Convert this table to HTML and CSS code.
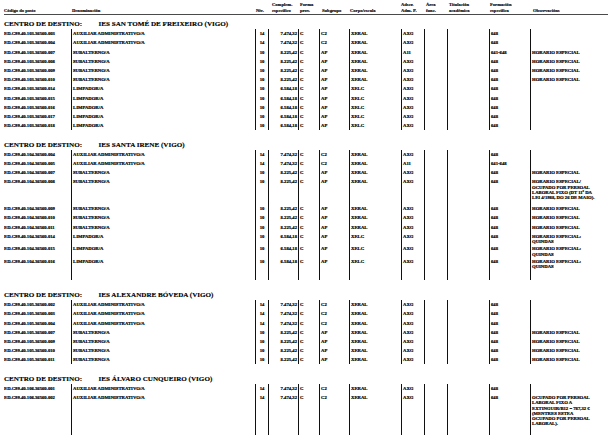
FILE: index.html
```html
<!DOCTYPE html>
<html lang="gl">
<head>
<meta charset="utf-8">
<title>Relación de postos</title>
<link rel="stylesheet" href="styles.css">
</head>
<body>
<div class="page">
  <div class="head">
    <div class="h1 lo">Código do posto</div>
    <div class="h2 lo">Denominación</div>
    <div class="h3 lo">Niv.</div>
    <div class="h4">Complem.<br>específico</div>
    <div class="h5">Forma<br>prov.</div>
    <div class="h6 lo">Subgrupo</div>
    <div class="h7 lo">Corpo/escala</div>
    <div class="h8">Adscr.<br>Adm. P.</div>
    <div class="h9">Área<br>func.</div>
    <div class="h10">Titulación<br>académica</div>
    <div class="h11">Formación<br>específica</div>
    <div class="h12 lo">Observacións</div>
  </div>

  <section class="sec">
    <div class="title"><span>CENTRO DE DESTINO:</span><span class="centre">IES SAN TOMÉ DE FREIXEIRO (VIGO)</span></div>
    <div class="tbl">
      <div class="row"><div>ED.C99.40.103.36560.003</div><div>AUXILIAR ADMINISTRATIVO/A</div><div class="n">14</div><div class="r">7.474,32</div><div>C</div><div>C2</div><div>XERAL</div><div>AXG</div><div></div><div></div><div>648</div><div></div></div>
      <div class="row"><div>ED.C99.40.103.36560.004</div><div>AUXILIAR ADMINISTRATIVO/A</div><div class="n">14</div><div class="r">7.474,32</div><div>C</div><div>C2</div><div>XERAL</div><div>AXG</div><div></div><div></div><div>648</div><div></div></div>
      <div class="row"><div>ED.C99.40.103.36560.007</div><div>SUBALTERNO/A</div><div class="n">10</div><div class="r">8.225,42</div><div>C</div><div>AP</div><div>XERAL</div><div>A11</div><div></div><div></div><div>641-648</div><div>HORARIO ESPECIAL</div></div>
      <div class="row"><div>ED.C99.40.103.36560.008</div><div>SUBALTERNO/A</div><div class="n">10</div><div class="r">8.225,42</div><div>C</div><div>AP</div><div>XERAL</div><div>AXG</div><div></div><div></div><div>648</div><div>HORARIO ESPECIAL</div></div>
      <div class="row"><div>ED.C99.40.103.36560.009</div><div>SUBALTERNO/A</div><div class="n">10</div><div class="r">8.225,42</div><div>C</div><div>AP</div><div>XERAL</div><div>AXG</div><div></div><div></div><div>648</div><div>HORARIO ESPECIAL</div></div>
      <div class="row"><div>ED.C99.40.103.36560.010</div><div>SUBALTERNO/A</div><div class="n">10</div><div class="r">8.225,42</div><div>C</div><div>AP</div><div>XERAL</div><div>AXG</div><div></div><div></div><div>648</div><div>HORARIO ESPECIAL</div></div>
      <div class="row"><div>ED.C99.40.103.36560.014</div><div>LIMPADOR/A</div><div class="n">10</div><div class="r">6.584,18</div><div>C</div><div>AP</div><div>XELC</div><div>AXG</div><div></div><div></div><div>648</div><div></div></div>
      <div class="row"><div>ED.C99.40.103.36560.015</div><div>LIMPADOR/A</div><div class="n">10</div><div class="r">6.584,18</div><div>C</div><div>AP</div><div>XELC</div><div>AXG</div><div></div><div></div><div>648</div><div></div></div>
      <div class="row"><div>ED.C99.40.103.36560.016</div><div>LIMPADOR/A</div><div class="n">10</div><div class="r">6.584,18</div><div>C</div><div>AP</div><div>XELC</div><div>AXG</div><div></div><div></div><div>648</div><div></div></div>
      <div class="row"><div>ED.C99.40.103.36560.017</div><div>LIMPADOR/A</div><div class="n">10</div><div class="r">6.584,18</div><div>C</div><div>AP</div><div>XELC</div><div>AXG</div><div></div><div></div><div>648</div><div></div></div>
      <div class="row"><div>ED.C99.40.103.36560.018</div><div>LIMPADOR/A</div><div class="n">10</div><div class="r">6.584,18</div><div>C</div><div>AP</div><div>XELC</div><div>AXG</div><div></div><div></div><div>648</div><div></div></div>
    </div>
  </section>

  <section class="sec">
    <div class="title"><span>CENTRO DE DESTINO:</span><span class="centre">IES SANTA IRENE (VIGO)</span></div>
    <div class="tbl">
      <div class="row"><div>ED.C99.40.104.36560.004</div><div>AUXILIAR ADMINISTRATIVO/A</div><div class="n">14</div><div class="r">7.474,32</div><div>C</div><div>C2</div><div>XERAL</div><div>AXG</div><div></div><div></div><div>648</div><div></div></div>
      <div class="row"><div>ED.C99.40.104.36560.005</div><div>AUXILIAR ADMINISTRATIVO/A</div><div class="n">14</div><div class="r">7.474,32</div><div>C</div><div>C2</div><div>XERAL</div><div>A11</div><div></div><div></div><div>641-648</div><div></div></div>
      <div class="row"><div>ED.C99.40.104.36560.007</div><div>SUBALTERNO/A</div><div class="n">10</div><div class="r">8.225,42</div><div>C</div><div>AP</div><div>XERAL</div><div>AXG</div><div></div><div></div><div>648</div><div>HORARIO ESPECIAL</div></div>
      <div class="row pad4"><div>ED.C99.40.104.36560.008</div><div>SUBALTERNO/A</div><div class="n">10</div><div class="r">8.225,42</div><div>C</div><div>AP</div><div>XERAL</div><div>AXG</div><div></div><div></div><div>648</div><div>HORARIO ESPECIAL/<br>OCUPADO POR PERSOAL<br>LABORAL FIXO (DT 11ª DA<br>LEI 4/1988, DO 26 DE MAIO).</div></div>
      <div class="row"><div>ED.C99.40.104.36560.009</div><div>SUBALTERNO/A</div><div class="n">10</div><div class="r">8.225,42</div><div>C</div><div>AP</div><div>XERAL</div><div>AXG</div><div></div><div></div><div>648</div><div>HORARIO ESPECIAL</div></div>
      <div class="row"><div>ED.C99.40.104.36560.010</div><div>SUBALTERNO/A</div><div class="n">10</div><div class="r">8.225,42</div><div>C</div><div>AP</div><div>XERAL</div><div>AXG</div><div></div><div></div><div>648</div><div>HORARIO ESPECIAL</div></div>
      <div class="row"><div>ED.C99.40.104.36560.011</div><div>SUBALTERNO/A</div><div class="n">10</div><div class="r">8.225,42</div><div>C</div><div>AP</div><div>XERAL</div><div>AXG</div><div></div><div></div><div>648</div><div>HORARIO ESPECIAL</div></div>
      <div class="row"><div>ED.C99.40.104.36560.014</div><div>LIMPADOR/A</div><div class="n">10</div><div class="r">6.584,18</div><div>C</div><div>AP</div><div>XELC</div><div>AXG</div><div></div><div></div><div>648</div><div>HORARIO ESPECIAL:<br>QUINDAS</div></div>
      <div class="row"><div>ED.C99.40.104.36560.015</div><div>LIMPADOR/A</div><div class="n">10</div><div class="r">6.584,18</div><div>C</div><div>AP</div><div>XELC</div><div>AXG</div><div></div><div></div><div>648</div><div>HORARIO ESPECIAL:<br>QUINDAS</div></div>
      <div class="row pad11"><div>ED.C99.40.104.36560.016</div><div>LIMPADOR/A</div><div class="n">10</div><div class="r">6.584,18</div><div>C</div><div>AP</div><div>XELC</div><div>AXG</div><div></div><div></div><div>648</div><div>HORARIO ESPECIAL:<br>QUINDAS</div></div>
    </div>
  </section>

  <section class="sec">
    <div class="title"><span>CENTRO DE DESTINO:</span><span class="centre">IES ALEXANDRE BÓVEDA (VIGO)</span></div>
    <div class="tbl">
      <div class="row"><div>ED.C99.40.105.36560.002</div><div>AUXILIAR ADMINISTRATIVO/A</div><div class="n">14</div><div class="r">7.474,32</div><div>C</div><div>C2</div><div>XERAL</div><div>AXG</div><div></div><div></div><div>648</div><div></div></div>
      <div class="row"><div>ED.C99.40.105.36560.003</div><div>AUXILIAR ADMINISTRATIVO/A</div><div class="n">14</div><div class="r">7.474,32</div><div>C</div><div>C2</div><div>XERAL</div><div>AXG</div><div></div><div></div><div>648</div><div></div></div>
      <div class="row"><div>ED.C99.40.105.36560.004</div><div>AUXILIAR ADMINISTRATIVO/A</div><div class="n">14</div><div class="r">7.474,32</div><div>C</div><div>C2</div><div>XERAL</div><div>AXG</div><div></div><div></div><div>648</div><div></div></div>
      <div class="row"><div>ED.C99.40.105.36560.007</div><div>SUBALTERNO/A</div><div class="n">10</div><div class="r">8.225,42</div><div>C</div><div>AP</div><div>XERAL</div><div>AXG</div><div></div><div></div><div>648</div><div>HORARIO ESPECIAL</div></div>
      <div class="row"><div>ED.C99.40.105.36560.009</div><div>SUBALTERNO/A</div><div class="n">10</div><div class="r">8.225,42</div><div>C</div><div>AP</div><div>XERAL</div><div>AXG</div><div></div><div></div><div>648</div><div>HORARIO ESPECIAL</div></div>
      <div class="row"><div>ED.C99.40.105.36560.010</div><div>SUBALTERNO/A</div><div class="n">10</div><div class="r">8.225,42</div><div>C</div><div>AP</div><div>XERAL</div><div>AXG</div><div></div><div></div><div>648</div><div>HORARIO ESPECIAL</div></div>
      <div class="row"><div>ED.C99.40.105.36560.011</div><div>SUBALTERNO/A</div><div class="n">10</div><div class="r">8.225,42</div><div>C</div><div>AP</div><div>XERAL</div><div>AXG</div><div></div><div></div><div>648</div><div>HORARIO ESPECIAL</div></div>
    </div>
  </section>

  <section class="sec">
    <div class="title"><span>CENTRO DE DESTINO:</span><span class="centre">IES ÁLVARO CUNQUEIRO (VIGO)</span></div>
    <div class="tbl">
      <div class="row"><div>ED.C99.40.106.36560.001</div><div>AUXILIAR ADMINISTRATIVO/A</div><div class="n">14</div><div class="r">7.474,32</div><div>C</div><div>C2</div><div>XERAL</div><div>AXG</div><div></div><div></div><div>648</div><div></div></div>
      <div class="row pad8"><div>ED.C99.40.106.36560.002</div><div>AUXILIAR ADMINISTRATIVO/A</div><div class="n">14</div><div class="r">7.474,32</div><div>C</div><div>C2</div><div>XERAL</div><div>AXG</div><div></div><div></div><div>648</div><div>OCUPADO POR PERSOAL<br>LABORAL FIXO A<br>EXTINGUIR/B12 = 787,32 €<br>(MENTRES ESTEA<br>OCUPADO POR PERSOAL<br>LABORAL).</div></div>
    </div>
  </section>
</div>
</body>
</html>
```

FILE: styles.css
```css
html, body {
  margin: 0;
  padding: 0;
  background: #ffffff;
}

body {
  font-family: "Liberation Serif", "Times New Roman", serif;
  font-weight: bold;
  color: #000000;
}

.page {
  padding: 0 7px 0 4px;
}

.head,
.row {
  display: grid;
  grid-template-columns: 67px 184px 13px 30px 21px 30px 52px 23px 23px 42px 41px 78px;
}

.head {
  height: 15px;
  box-sizing: border-box;
  padding-top: 1.5px;
  border-bottom: 1px solid #4a4a4a;
  font-size: 4.6px;
  line-height: 6.2px;
  white-space: nowrap;
  -webkit-text-stroke: 0.15px #000;
}

.head .lo {
  align-self: end;
}

.h2 { padding-left: 1px; }
.h3 { padding-left: 1px; }
.h4 { padding-left: 4px; }
.h5 { padding-left: 2px; }
.h6 { padding-left: 3px; }
.h7 { padding-left: 1px; }
.h9 { padding-left: 2px; }
.h10 { padding-left: 2px; }
.h11 { padding-left: 1px; }
.h12 { padding-left: 3px; }

.sec {
  margin-top: 10.5px;
}

.sec:first-of-type {
  margin-top: 5px;
}

.title {
  height: 8px;
  font-size: 7.1px;
  line-height: 8px;
  white-space: nowrap;
  -webkit-text-stroke: 0.15px #000;
}

.title .centre {
  margin-left: 16.5px;
}

.tbl {
  margin-top: 1px;
}

.row {
  min-height: 9.2px;
  font-size: 4.7px;
  line-height: 5.2px;
  white-space: nowrap;
  -webkit-text-stroke: 0.2px #000;
}

.row > div {
  padding-top: 2.3px;
  overflow: hidden;
}

.row > div + div {
  border-left: 1px solid #111111;
  padding-left: 1px;
}

.row > .n {
  text-align: center;
  padding-left: 0;
}

.row > .r {
  text-align: right;
  padding-left: 0;
  padding-right: 1px;
}

.row.pad4 > div { padding-bottom: 3.7px; }
.row.pad8 > div { padding-bottom: 8px; }
.row.pad11 > div { padding-bottom: 10.9px; }
```
